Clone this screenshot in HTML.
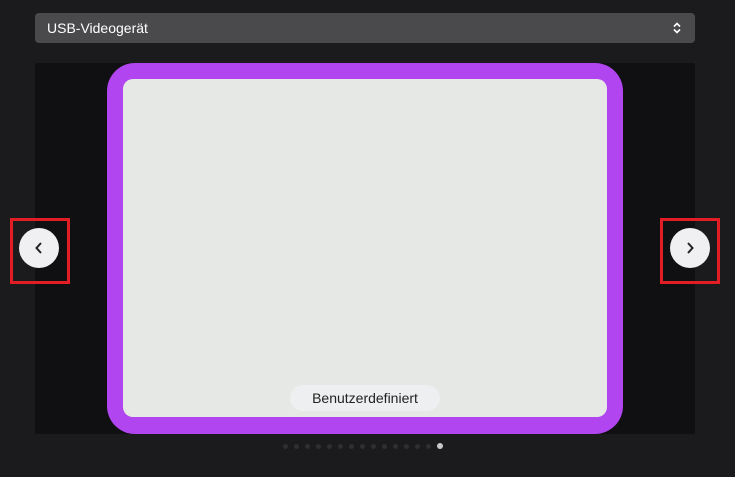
<!DOCTYPE html>
<html><head><style>
body{margin:0;width:735px;height:477px;background:#1b1b1d;position:relative;overflow:hidden;font-family:"Liberation Sans",sans-serif}
.sel{position:absolute;left:35px;top:13px;width:660px;height:30px;background:#4a4a4c;border-radius:4px;color:#fff;font-size:14px;line-height:30px;box-sizing:border-box;padding-left:12px}
.panel{position:absolute;left:35px;top:63px;width:660px;height:371px;background:#101012;border-radius:2px}
.card{position:absolute;left:107px;top:63px;width:516px;height:371px;background:#b145ef;border-radius:28px}
.inner{position:absolute;left:16px;top:16px;width:484px;height:338px;background:#e5e8e4;border-radius:10px}
.pill{position:absolute;left:167px;top:306px;width:150px;height:26px;background:#eeeff0;border-radius:13px;text-align:center;line-height:26px;font-size:14px;color:#222}
.box{position:absolute;top:218px;width:54px;height:60px;border:3px solid #e21d24}
.btn{position:absolute;top:228px;width:40px;height:40px;border-radius:50%;background:#f0f0f2}
.dot{position:absolute;top:444px;width:5px;height:5px;border-radius:50%;background:#2f2f33}
</style></head><body>
<div class="sel">USB-Videogerät
<svg style="position:absolute;right:14px;top:9px" width="8" height="12" viewBox="0 0 8 12"><path d="M1 4.5L4 1.5L7 4.5M1 7.5L4 10.5L7 7.5" stroke="#fff" stroke-width="1.6" fill="none"/></svg></div>
<div class="panel"></div>
<div class="card"><div class="inner"><div class="pill">Benutzerdefiniert</div></div></div>
<div class="box" style="left:10px"></div>
<div class="btn" style="left:19px"><svg width="40" height="40"><path d="M22 15L17.5 20L22 25" stroke="#222" stroke-width="2" fill="none"/></svg></div>
<div class="box" style="left:660px"></div>
<div class="btn" style="left:670px"><svg width="40" height="40"><path d="M18 15L22.5 20L18 25" stroke="#222" stroke-width="2" fill="none"/></svg></div>
<div class="dot" style="left:283px"></div><div class="dot" style="left:294px"></div><div class="dot" style="left:305px"></div><div class="dot" style="left:316px"></div><div class="dot" style="left:327px"></div><div class="dot" style="left:338px"></div><div class="dot" style="left:349px"></div><div class="dot" style="left:360px"></div><div class="dot" style="left:371px"></div><div class="dot" style="left:382px"></div><div class="dot" style="left:393px"></div><div class="dot" style="left:404px"></div><div class="dot" style="left:415px"></div><div class="dot" style="left:426px"></div><div class="dot" style="left:437px;background:#c8c8cc;width:6px;height:6px;top:443px"></div>
</body></html>
